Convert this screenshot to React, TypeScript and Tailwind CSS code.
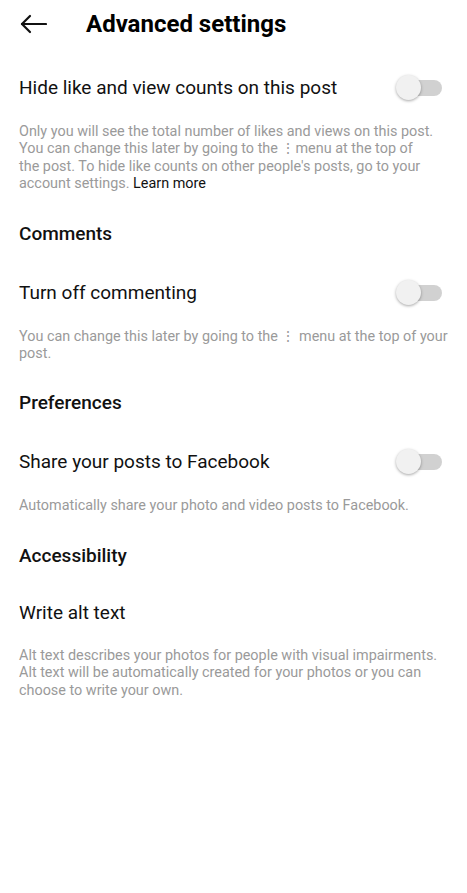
import React from 'react';

const Toggle = () => (
  <div className="relative w-[46px] h-[26px] shrink-0">
    <div className="absolute right-0 top-[5px] w-[36px] h-[16px] rounded-full bg-[#d1d1d1]" />
    <div className="absolute left-0 top-0 w-[25px] h-[25px] rounded-full bg-[#f1f1f1] shadow-[0_1px_3px_rgba(0,0,0,0.35)]" />
  </div>
);

const Row = ({ label, toggle }: { label: string; toggle?: boolean }) => (
  <div className="flex items-center justify-between pr-[25px]">
    <span className="text-[19px] leading-[24px] text-[#111]">{label}</span>
    {toggle && <Toggle />}
  </div>
);

const Desc = ({ children, wide }: { children: React.ReactNode; wide?: boolean }) => (
  <p className={`mt-[22px] ${wide ? 'pr-[6px]' : 'pr-[20px]'} text-[14.4px] leading-[17.4px] text-[#9a9a9a]`}>{children}</p>
);

const Section = ({ title }: { title: string }) => (
  <h2 className="mt-[29px] mb-[34px] text-[19px] leading-[24px] font-medium text-[#111]">{title}</h2>
);

export default function App() {
  return (
    <div className="min-h-[893px] w-[467px] bg-white" style={{ fontFamily: 'Roboto, "Noto Sans", sans-serif' }}>
      <div className="flex items-center h-12 pl-5">
        <svg width="27" height="20" viewBox="0 0 27 20" fill="none" stroke="#111" strokeWidth="2.2" strokeLinecap="round" strokeLinejoin="round">
          <path d="M26 10H2" />
          <path d="M10 2L2 10L10 18" />
        </svg>
        <h1 className="ml-[39px] text-[24px] font-bold text-black">Advanced settings</h1>
      </div>

      <div className="pl-[19px]">
        <div className="mt-[27px]">
          <Row label="Hide like and view counts on this post" toggle />
        </div>
        <Desc>
          Only you will see the total number of likes and views on this post.
          <br />
          You can change this later by going to the ⋮menu at the top of
          <br />
          the post. To hide like counts on other people's posts, go to your
          <br />
          account settings. <span className="text-[#111]">Learn more</span>
        </Desc>

        <Section title="Comments" />
        <Row label="Turn off commenting" toggle />
        <Desc wide>You can change this later by going to the ⋮ menu at the top of your post.</Desc>

        <Section title="Preferences" />
        <Row label="Share your posts to Facebook" toggle />
        <Desc>Automatically share your photo and video posts to Facebook.</Desc>

        <Section title="Accessibility" />
        <div className="-mt-[1px]">
          <Row label="Write alt text" />
        </div>
        <Desc>
          Alt text describes your photos for people with visual impairments. Alt text will be automatically created for your photos or you can choose to write your own.
        </Desc>
      </div>
    </div>
  );
}
